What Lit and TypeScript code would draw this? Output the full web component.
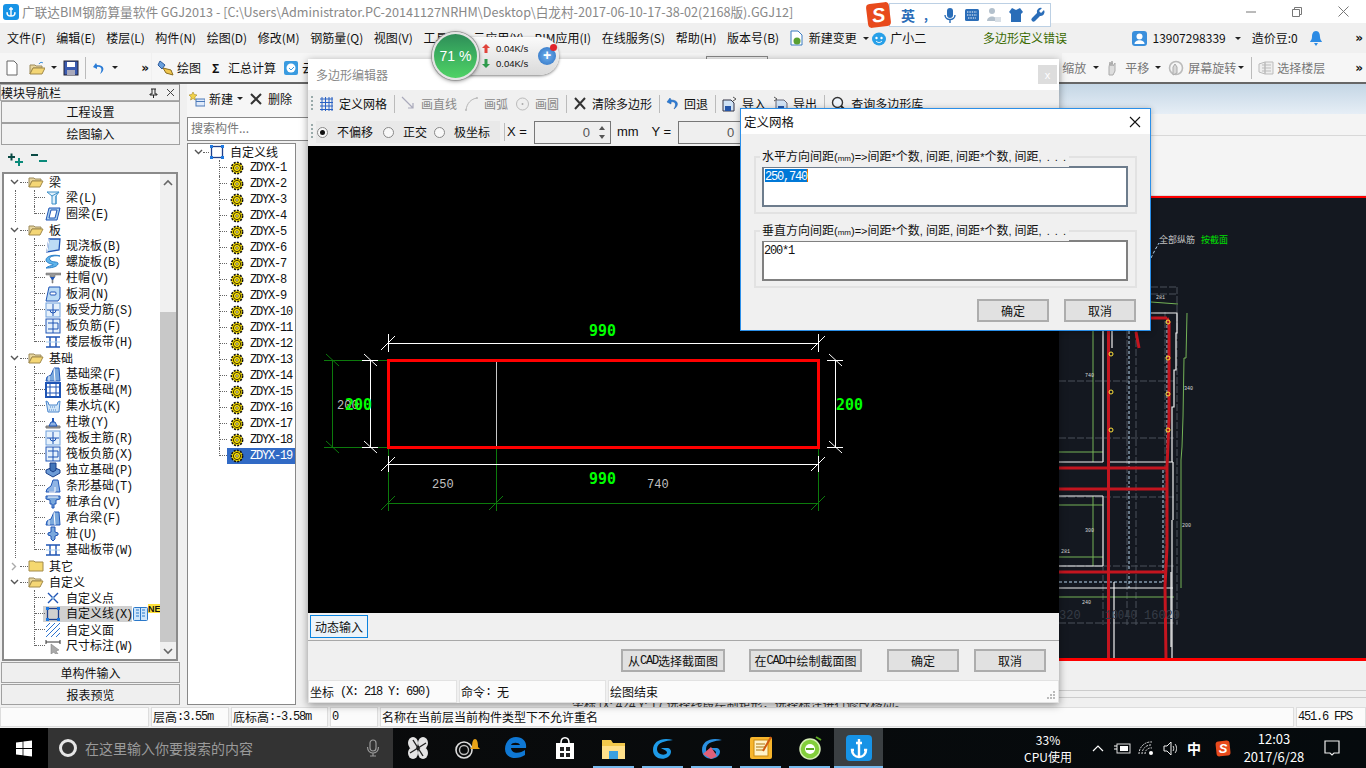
import { css, html, LitElement, svg } from "lit";
import { customElement } from "lit/decorators.js";

const ico = (body: unknown, w = 16, h = 16) =>
  html`<svg class="ico" width=${w} height=${h} viewBox="0 0 ${w} ${h}">${body}</svg>`;

// splits text so latin runs get the narrow mono face, as in the original bitmap font
const mix = (text: string) =>
  text.split(/([\u0020-\u007e]+)/).filter(Boolean).map((part) =>
    /^[\u0020-\u007e]+$/.test(part) ? html`<span class="lat">${part}</span>` : part
  );

const B = "#1f55b5";
const L = "#a9d0f0";
const ICONS: Record<string, unknown> = {
  beam: svg`<path d="M2 2h12l-3 4v8H7V6z" fill="#dff0fb" stroke="#3c8fc8"/><path d="M7 6l7-4M11 6V14" stroke="#3c8fc8" fill="none"/>`,
  ring: svg`<path d="M4 2h11l-3 12H1z" fill="${L}" stroke="${B}"/><path d="M6 4h6l-2 8H4z" fill="#fff" stroke="${B}"/>`,
  slab: svg`<path d="M4 1h11l-1 11-12 2z" fill="#bcdcf5" stroke="${B}" stroke-width="1.3"/><path d="M2 14l2-13" stroke="#fff"/>`,
  spiral: svg`<path d="M15 2C8 1 3 3 5 6s9 1 8 4-7 4-12 4c2-2 5-2 7-3S1 10 1 6 9 0 15 2z" fill="#5db4ea" stroke="#2b7fc9"/>`,
  cap: svg`<path d="M1 3h15v2H10v2H8v6H7V7H5V5H1z" fill="#999" stroke="#666" stroke-width=".5"/><path d="M5 7h5l-2 3H7z" fill="${B}"/>`,
  hole: svg`<path d="M4 1h11v11L13 15H1z" fill="#bcdcf5" stroke="${B}"/><rect x="5" y="6" width="6" height="3" rx="1" fill="#fff" stroke="${B}"/>`,
  rebar: svg`<rect x="1" y="1" width="14" height="14" fill="#e6f1fb" stroke="#6ea0dc"/><path d="M8 2v12M2 8h12M5 8a3 3 0 0 0 6 0" stroke="${B}" fill="none"/>`,
  neg: svg`<rect x="1" y="1" width="14" height="14" fill="#e6f1fb" stroke="${B}"/><path d="M8 1v14M3 5h10v6H3" stroke="${B}" fill="none"/>`,
  strip: svg`<path d="M1 3h14M1 13h14M5 3v10M11 3v10" stroke="${B}" stroke-width="1.4"/><path d="M1 8h14" stroke="${L}"/>`,
  fbeam: svg`<path d="M1 15l1-4 4-2 3-7h5l1 13z" fill="#7aa8dc" stroke="${B}"/><path d="M9 2l1 13M4 15v-5" stroke="#fff"/>`,
  raft: svg`<rect x="1" y="1" width="14" height="14" fill="#fff" stroke="${B}" stroke-width="2"/><path d="M5 1v14M11 1v14M1 5h14M1 11h14" stroke="${B}"/>`,
  sump: svg`<path d="M1 3l2 1 1 3h8l1-3 2-1-1 11H3z" fill="#cfe4f7" stroke="#4a86cc"/><path d="M5 9h6M4 12h8" stroke="#4a86cc" stroke-dasharray="1 1"/>`,
  pier: svg`<path d="M1 12h14v2H1z" fill="#999" stroke="#777"/><path d="M4 12l2-4h4l2 4z" fill="#8fb4e4" stroke="${B}"/><rect x="7" y="4" width="2" height="4" fill="${B}"/>`,
  solo: svg`<path d="M1 8l7-3 7 3v3l-7 4-7-4z" fill="#6c9bd6" stroke="#183f8a"/><path d="M5 1h6v7l-3 2-3-2z" fill="#4375b8" stroke="#183f8a"/>`,
  band: svg`<path d="M1 14l1-3 4-3 2-6h5l2 12z" fill="#8fb4e4" stroke="${B}"/><path d="M4 14h6V9" fill="none" stroke="#fff"/>`,
  pcap: svg`<path d="M1 2h14v3l-4 1v4H9v4H7v-4H5V6L1 5z" fill="#7aa8dc" stroke="${B}"/><path d="M3 3h10" stroke="#fff"/>`,
  pile: svg`<path d="M6 1h4v5l3 1v2l-3 1v3l-2 2-2-2v-3L3 9V7l3-1z" fill="#7aa8dc" stroke="${B}"/>`,
  point: svg`<path d="M3 3l10 10M13 3L3 13" stroke="#1f55b5" stroke-width="1.4"/><circle cx="8" cy="8" r="1.5" fill="#7aa8dc"/>`,
  line: svg`<rect x="2.5" y="2.5" width="11" height="11" fill="none" stroke="#1f3f8a" stroke-width="1.3"/><g fill="#1e78e0"><rect x="1" y="1" width="3" height="3"/><rect x="12" y="1" width="3" height="3"/><rect x="1" y="12" width="3" height="3"/><rect x="12" y="12" width="3" height="3"/></g>`,
  face: svg`<path d="M1 5l4-4M1 10l9-9M1 15L15 1M6 15l9-9M11 15l4-4" stroke="#2d74d0"/>`,
  dim: svg`<path d="M1 2v4M15 2v4M1 4h14" stroke="#333"/><path d="M6 6l8 6-3 1 2 3-2 1-2-3-3 2z" fill="#aaa" stroke="#777" stroke-width=".5"/>`,
};

const folderIcon = (open: boolean) =>
  ico(open
    ? svg`<path d="M1 4h5l1 1h6v2H4L1 13z" fill="#e8d69e" stroke="#9c8a5a"/><path d="M4 7h11l-3 6H1z" fill="#f4d675" stroke="#a28a4a"/>`
    : svg`<path d="M1 3h5l1 1h8v9H1z" fill="#f5d86f" stroke="#a28a4a"/>`);

const gear = ico(svg`<circle cx="7" cy="7" r="5.6" fill="#ffe600" stroke="#111" stroke-width="1.6" stroke-dasharray="2 1.2"/><circle cx="7" cy="7" r="3.6" fill="#ffe600" stroke="#3d3000"/><circle cx="7" cy="7" r="1.3" fill="#fff7a0" stroke="#222" stroke-width=".6"/>`, 14, 14);

const chevDown = ico(svg`<path d="M1 1l3.5 3.5L8 1" fill="none" stroke="#555" stroke-width="1.4"/>`, 9, 6);
const chevRight = ico(svg`<path d="M1 1l3.5 3.5L1 8" fill="none" stroke="#aaa" stroke-width="1.4"/>`, 6, 9);
const caret = html`<span class="caret"></span>`;

const NAV: { t: string; open: boolean; last?: boolean; kids: string[][] }[] = [
  { t: "梁", open: true, kids: [["梁(L)", "beam"], ["圈梁(E)", "ring"]] },
  { t: "板", open: true, kids: [["现浇板(B)", "slab"], ["螺旋板(B)", "spiral"], ["柱帽(V)", "cap"], ["板洞(N)", "hole"], ["板受力筋(S)", "rebar"], ["板负筋(F)", "neg"], ["楼层板带(H)", "strip"]] },
  { t: "基础", open: true, kids: [["基础梁(F)", "fbeam"], ["筏板基础(M)", "raft"], ["集水坑(K)", "sump"], ["柱墩(Y)", "pier"], ["筏板主筋(R)", "rebar"], ["筏板负筋(X)", "neg"], ["独立基础(P)", "solo"], ["条形基础(T)", "band"], ["桩承台(V)", "pcap"], ["承台梁(F)", "fbeam"], ["桩(U)", "pile"], ["基础板带(W)", "strip"]] },
  { t: "其它", open: false, kids: [] },
  { t: "自定义", open: true, last: true, kids: [["自定义点", "point"], ["自定义线(X)", "line"], ["自定义面", "face"], ["尺寸标注(W)", "dim"]] },
];

const MENU = ["文件(F)", "编辑(E)", "楼层(L)", "构件(N)", "绘图(D)", "修改(M)", "钢筋量(Q)", "视图(V)", "工具(T)", "云应用(Y)", "BIM应用(I)", "在线服务(S)", "帮助(H)", "版本号(B)"];

type Seg = number[];
const RED: Seg[] = [
  [1108.5, 330, 1108.5, 660], [1059, 468, 1167, 468], [1059, 489, 1167, 489], [1059, 572, 1166, 572], [1151, 318, 1167, 318],
];
const WHITE: Seg[] = [
  [1103, 330, 1103, 462], [1059, 462, 1103, 462], [1059, 496, 1103, 496], [1103, 496, 1103, 566], [1059, 566, 1103, 566],
  [1108, 462, 1173, 462], [1114, 582, 1114, 660], [1059, 588, 1173, 588], [1172, 520, 1172, 660], [1112, 330, 1112, 348],
];
const GREEN: Seg[] = [
  [1093, 330, 1093, 462], [1059, 452, 1103, 452], [1093, 496, 1093, 566], [1059, 505, 1103, 505], [1059, 557, 1103, 557],
  [1059, 597, 1174, 597], [1151, 302, 1178, 304],
];
const DASH: Seg[] = [
  [1059, 381, 1176, 381], [1059, 438, 1176, 438], [1059, 497, 1176, 497], [1059, 566, 1176, 566], [1059, 623, 1178, 623],
  [1103, 566, 1103, 625], [1127, 331, 1127, 625], [1136, 331, 1136, 625], [1165, 312, 1165, 625], [1177, 287, 1177, 625],
  [1151, 287, 1178, 287], [1151, 294, 1178, 294],
];
const BLUE: Seg[] = [[1129, 331, 1129, 588], [1167, 320, 1167, 465], [1163, 470, 1163, 582], [1059, 582, 1165, 582]];
const RINGS = [[1111, 354], [1111, 392], [1111, 430], [1168, 322], [1168, 358], [1168, 394], [1168, 430]];
const TINY = [[1085, 377, "740"], [1184, 390, "340"], [1182, 527, "200"], [1085, 532, "300"], [1061, 553, "281"], [1082, 604, "240"], [1156, 299, "281"]];

const lines = (segs: Seg[], cls: string) =>
  segs.map(([a, b, c, d]) => svg`<line class=${cls} x1=${a} y1=${b} x2=${c} y2=${d}></line>`);

@customElement("app-root")
export class AppRoot extends LitElement {
  static styles = css`
    :host { display: block; }
    * { box-sizing: border-box; }
    .app {
      position: relative; width: 1366px; height: 768px; overflow: hidden; display: flex; flex-direction: column;
      background: #f0f0f0; color: #111; font: 12px/16px "Noto Sans CJK SC", "Liberation Sans", sans-serif;
    }
    .lat { font-family: "Liberation Mono", monospace; font-size: 12px; letter-spacing: -1.2px; white-space: pre; }
    .ico { display: block; flex: none; }
    .caret { width: 0; height: 0; border: 3px solid transparent; border-top: 3px solid #222; border-bottom: 0; flex: none; }
    .m1 { margin-left: 1px; } .m2 { margin-left: 2px; } .m3 { margin-left: 3px; } .m5 { margin-left: 5px; }
    .m6 { margin-left: 6px; } .m7 { margin-left: 7px; } .m30 { margin-left: 30px; }

    .title { height: 23px; background: #fff; display: flex; align-items: center; padding-left: 3px; color: #888; white-space: nowrap; }
    .title .name { margin-left: 3px; font-family: "Noto Sans CJK SC", "Open Sans", sans-serif; font-size: 12.65px; }
    .logo { width: 16px; height: 16px; border-radius: 3px; background: #1793e6; display: flex; align-items: center; justify-content: center; }
    .logo.big { width: 26px; height: 26px; border-radius: 4px; }
    .winbtns { margin-left: auto; display: flex; }
    .winbtns span { width: 46px; height: 23px; display: flex; align-items: center; justify-content: center; }

    .menu { height: 30px; padding-left: 7px; display: flex; align-items: center; gap: 10.6px; white-space: nowrap; font-size: 12px; }
    .menu .extra { display: flex; align-items: center; gap: 6px; margin-left: -1px; }
    .menu .extra.gx { margin-left: -8px; gap: 3px; }
    .menu .warn { color: #3a6a00; margin-left: 46px; width: 138px; }
    .menu .user { display: flex; align-items: center; gap: 4px; }
    .menu .more { margin-left: auto; padding-right: 3px; }
    .more { font: bold 12px "DejaVu Sans", sans-serif; }

    .tools { height: 31px; display: flex; border-bottom: 2px solid #666; white-space: nowrap; }
    .tbgroup { display: flex; align-items: center; background: #f6f6f6; height: 29px; }
    .tbgroup.a { width: 151px; padding: 0 2px 0 4px; gap: 6px; }
    .tbgroup.a .back { margin-left: -3px; }
    .tbgroup.a .more { margin-left: auto; }
    .tbgroup.b { padding-left: 5px; gap: 3px; margin-left: 1px; width: 554px; }
    .tbgroup.c { margin-left: auto; padding-right: 3px; }
    .vsep { width: 1px; height: 22px; background: #bbb; flex: none; }
    .stub { width: 62px; height: 26px; border: 1px solid #888; border-bottom: 0; margin-top: 3px; }
    .dim { color: #777; }
    .g1 { width: 1px; }

    .body { flex: 1; min-height: 0; display: flex; }
    .nav { width: 181px; display: flex; flex-direction: column; padding-bottom: 2px; }
    .navhead { height: 17px; display: flex; align-items: center; border: 1px solid #aaa; border-right-color: #888; padding: 0 4px 0 0; margin-right: 1px; line-height: 14px; }
    .navhead .t { flex: 1; }
    .navhead svg { margin-left: 8px; }
    .navbtn { height: 22px; margin: 0 1px 0 1px; display: flex; align-items: center; justify-content: center; border: 1px solid #a0a0a0; background: #f2f2f2; flex: none; }
    .navtools { height: 27px; display: flex; align-items: center; padding-left: 6px; gap: 6px; flex: none; }
    .navtree { flex: 1; min-height: 0; margin: 0 3px 0 2px; border: 2px solid #8a8a8a; background: #fff; position: relative; }
    .navbtn.low { margin-top: 1px; background: #efefef; height: 21px; }

    .row { height: 16px; display: flex; align-items: center; white-space: nowrap; position: relative; }
    .row .lead { width: 8px; margin-left: 6px; display: flex; justify-content: center; flex: none; }
    .row .hdot { width: 8px; margin: 0 0 0 2px; border-top: 1px dotted #666; flex: none; }
    .row .ftext { margin-left: 5px; font-size: 12px; }
    .trunk { width: 1px; height: 16px; border-left: 1px dotted #666; flex: none; margin-left: 11px; }
    .trunk.none { border-left-color: transparent; }
    .elbow { width: 11px; height: 16px; margin-left: 18px; flex: none; border-left: 1px dotted #666; }
    .elbow.end { height: 8px; align-self: flex-start; }
    .elbow::after { content: ""; display: block; margin-top: 7px; border-top: 1px dotted #666; }
    .row .label { margin-left: 5px; }
    .sel { position: absolute; left: 39px; top: 0; width: 89px; height: 16px; background: #d0d0d0; z-index: 0; }
    .row > * { z-index: 1; }
    .kid { display: inline-flex; margin-left: 1px; }
    .newb { position: absolute; left: 144px; top: -2px; font: bold 9px/10px "Liberation Sans", sans-serif; color: #111; background: #ffe23a; width: 12px; overflow: hidden; height: 9px; }
    .sb { position: absolute; right: 0; top: 0; bottom: 0; width: 16px; background: #f0f0f0; display: flex; flex-direction: column; align-items: center; }
    .sb .up { height: 138px; width: 100%; padding-top: 5px; display: flex; justify-content: center; }
    .sb .thumb { flex: 1; width: 100%; background: #c8c8c8; }
    .sb .down { height: 17px; display: flex; align-items: center; }

    .comp { width: 127px; display: flex; flex-direction: column; padding-left: 6px; }
    .comptools { height: 33px; display: flex; align-items: center; padding: 0 0 4px 2px; gap: 4px; background: #f6f6f6; white-space: nowrap; }
    .search { height: 24px; border: 1px solid #888; background: #fff; padding: 2px 3px; color: #777; margin-right: -8px; flex: none; }
    .ctree { flex: 1; min-height: 0; margin: 2px 12px 2px 0; border: 1px solid #888; background: #fff; }
    .croot .lead { margin-left: 6px; }
    .croot .hdot { width: 6px; margin-left: 1px; }
    .croot .ftext { margin-left: 5px; }
    .cleaf .elbow { margin-left: 31px; width: 8px; }
    .cleaf .zd { height: 16px; display: flex; align-items: center; padding-left: 3px; flex: 1; color: #111; }
    .cleaf .zd .lat { margin-left: 6px; }
    .cleaf.on .zd { background: #316ac5; }
    .cleaf.on .zd .lat { color: #fff; }

    .main { flex: 1; display: flex; flex-direction: column; min-width: 0; }
    .band { height: 30px; background: linear-gradient(#c4d6e5, #e6eef6); }
    .plain { height: 82px; border-bottom: 1px solid #ddd; background: linear-gradient(#d8d8d8, #d8d8d8) 0 21px / 100% 1px no-repeat, #f4f4f4; }
    .cad { height: 465px; border-top: 2px solid #f00; border-bottom: 3px solid #f00; background: #141820; display: flex; justify-content: flex-end; }
    .cad svg { display: block; flex: none; }
    .foot { flex: 1; min-height: 0; display: flex; flex-direction: column; justify-content: flex-end; }
    .foot .l1 { border-top: 1px solid #ccc; height: 7px; }
    .foot .l2 { border-top: 1px solid #ccc; height: 10px; color: #333; overflow: hidden; line-height: 12px; padding-left: 264px; white-space: nowrap; }
    .s-red { stroke: #c4151f; stroke-width: 3; fill: none; }
    .s-white { stroke: #f2f2f2; stroke-width: 1.2; fill: none; }
    .s-green { stroke: #74b257; stroke-width: 1; fill: none; }
    .s-dash { stroke: #4a505a; stroke-width: 1; stroke-dasharray: 7 2; fill: none; }
    .s-blue { stroke: #b8d8f0; stroke-width: 1; stroke-dasharray: 3 2; fill: none; }
    .ring { stroke: #ffe23a; stroke-width: 1; fill: none; }

    .status { height: 21px; display: flex; gap: 2px; padding-bottom: 1px; }
    .status div { background: #fbfbfb; border: 1px solid #ddd; display: flex; align-items: center; padding-left: 1px; white-space: nowrap; }
    .c0 { width: 149px; } .c1 { width: 78px; } .c2 { width: 97px; } .c3 { width: 48px; } .c4 { flex: 1; } .c5 { width: 70px; }

    .task { height: 40px; display: flex; background: linear-gradient(90deg, #0b0b0b, #050a0d); color: #fff; white-space: nowrap; }
    .start { width: 48px; background: #000; display: flex; align-items: center; justify-content: center; }
    .cortana { width: 345px; background: #333; display: flex; align-items: center; padding-left: 11px; color: #9a9a9a; font-size: 14px; }
    .cortana .o { width: 18px; height: 18px; border-radius: 50%; border: 3px solid #e6e6e6; flex: none; margin-right: 8px; }
    .cortana .mic { margin-left: auto; margin-right: 13px; }
    .tb { width: 49px; display: flex; align-items: center; justify-content: center; }
    .tb.run { background: linear-gradient(#76b9ed, #76b9ed) center bottom / 41px 2px no-repeat; }
    .tb.on { background: linear-gradient(#76b9ed, #76b9ed) center bottom / 100% 2px no-repeat, #3a3f42; }
    .tray { margin-left: 135px; display: flex; align-items: center; }
    .cpu { width: 60px; text-align: center; line-height: 17px; }
    .slot { width: 24px; display: flex; justify-content: center; align-items: center; flex: none; }
    .gap8 { width: 8px; } .gap5 { width: 5px; }
    .zh { font-size: 14px; font-weight: 700; }
    .clock { width: 72px; text-align: center; line-height: 18px; margin-left: 3px; font-size: 13px; }
    .notif { width: 44px; display: flex; justify-content: center; }

    .editor {
      position: absolute; left: 308px; top: 59px; width: 751px; height: 644px; background: #f0f0f0; display: flex; flex-direction: column;
      box-shadow: 0 2px 8px rgba(0, 0, 0, .4); z-index: 2;
    }
    .ehead { height: 31px; background: #fff; display: flex; align-items: center; padding-left: 8px; color: #888; }
    .eclose { margin-left: auto; margin-right: 2px; width: 19px; height: 19px; background: #ddd; color: #fff; display: flex; align-items: center; justify-content: center; font: 11px "Liberation Sans", sans-serif; }
    .ebar { height: 28px; display: flex; align-items: center; padding-left: 3px; white-space: nowrap; }
    .ebar .grip { width: 2px; height: 16px; flex: none; margin-right: 6px; background: repeating-linear-gradient(#9aa, #9aa 2px, transparent 2px, transparent 4px); }
    .ebar .item { display: flex; align-items: center; gap: 5px; margin-right: 7px; }
    .ebar .vsep { margin-right: 6px; height: 18px; }
    .ebar .vsep.s2 { margin-right: 2px; }
    .ebar .off { color: #888; }
    .radios { display: flex; align-items: center; background: #e9e9e9; height: 22px; padding-left: 1px; width: 184px; margin-left: -3px; margin-right: 4px; flex: none; }
    .radio { width: 11px; height: 11px; border: 1px solid #888; border-radius: 50%; background: #f8f8f8; margin: 0 4px 0 0; flex: none; display: flex; align-items: center; justify-content: center; }
    .radio.on::after { content: ""; width: 5px; height: 5px; border-radius: 50%; background: #111; }
    .radios span.tx { margin: 0 10px 0 5px; }
    .radios span.tx.tight { margin-right: 7px; }
    .lbl { font-family: "Liberation Sans", sans-serif; font-size: 13px; }
    .lbl.y { margin-left: 13px; }
    .spin { width: 77px; height: 23px; background: #efefef; border: 1px solid #777; margin: 0 6px 0 7px; display: flex; align-items: center; justify-content: flex-end; color: #555; font: 13px "Liberation Sans", sans-serif; flex: none; }
    .spin .arr { width: 15px; margin-left: 5px; display: flex; flex-direction: column; align-items: center; gap: 5px; }
    .canvas { height: 467px; background: #000; flex: none; }
    .canvas svg { display: block; }
    .dyn { height: 28px; border-bottom: 1px solid #a8a8a8; padding: 2px; flex: none; }
    .dynb { width: 58px; height: 23px; border: 1px solid #0a84e0; background: #ecf4fa; display: flex; align-items: center; justify-content: center; }
    .eact { height: 39px; display: flex; justify-content: flex-end; align-items: center; padding-right: 13px; flex: none; }
    .wbtn { height: 23px; background: #e1e1e1; border: 2px solid #adadad; display: flex; align-items: center; justify-content: center; flex: none; }
    .w103 { width: 104px; margin-right: 24px; } .w113 { width: 113px; margin-right: 25px; } .w72 { width: 72px; } .w72.m { margin-right: 15px; }
    .estat { height: 23px; display: flex; gap: 2px; }
    .estat div { background: #fbfbfb; border: 1px solid #e2e2e2; display: flex; align-items: center; padding-left: 1px; white-space: nowrap; }
    .grip2 { margin-left: auto; margin-right: 2px; align-self: flex-end; margin-bottom: 2px; }
    .e0 { width: 149px; } .e1 { width: 147px; } .e2 { flex: 1; }

    .dlg {
      position: absolute; left: 740px; top: 108px; width: 411px; height: 223px; border: 1.5px solid #2b8fe8; background: #f0f0f0; z-index: 3;
      display: flex; flex-direction: column; box-shadow: 0 1px 6px rgba(0, 0, 0, .3);
    }
    .dhead { height: 25px; background: #fff; display: flex; align-items: center; padding-left: 3px; font-size: 12.5px; flex: none; }
    .dhead svg { margin-left: auto; margin-right: 9px; }
    .dbody { padding: 22px 13px 0 13px; display: flex; flex-direction: column; gap: 16px; flex: 1; }
    .group { height: 58px; border: 2px solid #e2e2e2; padding: 8px 7px 0 6px; display: flex; flex-direction: column; position: relative; }
    .legend { position: absolute; left: 4px; top: -10px; background: #f0f0f0; padding: 0 2px; line-height: 16px; white-space: nowrap; }
    .legend .lat { font-family: "Liberation Sans", sans-serif; font-size: 11px; letter-spacing: 0; }
    .legend .mm { font-size: 8px; }
    .legend .dots { letter-spacing: 1px; }
    .area { height: 41px; border: 2px solid #808080; background: #fff; line-height: 14px; padding: 0; }
    .area.focus { border-color: #6d7c8c; }
    .picked { background: #0078d7; color: #fff; border-right: 1px solid #e87000; display: inline-block; height: 13px; line-height: 12px; margin: 1px 0 0 1px; vertical-align: top; }
    .dact { display: flex; justify-content: flex-end; gap: 15px; padding: 0 14px 8px 0; }

    .net { position: absolute; left: 432px; top: 32px; z-index: 4; display: flex; align-items: center; }
    .globe {
      width: 47px; height: 48px; border-radius: 50%; position: relative; z-index: 1; flex: none; color: #fff; font: 14px "Liberation Sans", sans-serif;
      background: linear-gradient(#2f8d58, #38a85e 35%, #4fd265); border: 2px solid #e4e4e4; box-shadow: 0 0 0 1px #999, 0 1px 4px rgba(0, 0, 0, .5);
      display: flex; align-items: center; justify-content: center;
    }
    .pill {
      margin-left: -22px; width: 102px; height: 38px; border-radius: 0 19px 19px 0; padding-left: 25px; padding-right: 6px;
      background: linear-gradient(#fafafa, #dadada); box-shadow: 0 1px 3px rgba(0, 0, 0, .5); display: flex; align-items: center; gap: 4px;
    }
    .rates { font: 9.5px/15px "Liberation Sans", sans-serif; color: #111; width: 42px; flex: none; }
    .rate { display: flex; align-items: center; gap: 6px; white-space: nowrap; }
    .plus { width: 18px; height: 18px; border-radius: 50%; background: radial-gradient(#6fb0ee, #2c6fc0); color: #fff; position: relative; font: bold 14px/17px "Liberation Sans", sans-serif; text-align: center; flex: none; margin-left: 10px; }
    .plus::after { content: ""; position: absolute; right: -1px; top: -3px; width: 7px; height: 7px; border-radius: 50%; background: #e0242b; }

    .ime { position: absolute; left: 867px; top: 3px; z-index: 4; display: flex; align-items: center; }
    .ime .s { width: 23px; height: 24px; background: #e84a1c; border-radius: 4px; color: #fff; font: italic bold 20px/24px "Liberation Sans", sans-serif; text-align: center; transform: rotate(-7deg); flex: none; z-index: 1; }
    .ime .bar { width: 162px; height: 24px; background: #fff; border: 1px solid #bcd0e4; margin-left: -1px; display: flex; align-items: center; padding-left: 11px; gap: 6px; color: #2a6db8; font-weight: 700; font-size: 14px; }
    .ime .comma { width: 10px; font-size: 12px; margin-left: 3px; margin-right: 2px; }
  `;

  renderNav() {
    return NAV.map(
      (g) => html`
        <div class="row">
          <span class="lead">${g.open ? chevDown : chevRight}</span>
          <span class="hdot"></span>
          ${folderIcon(g.open)}
          <span class="ftext">${g.t}</span>
        </div>
        ${g.kids.map(([label, icon], i) => {
          const picked = label.startsWith("自定义线");
          return html`<div class="row">
            ${picked ? html`<span class="sel"></span>` : ""}
            <span class="trunk ${g.last ? "none" : ""}"></span>
            <span class="elbow ${i === g.kids.length - 1 ? "end" : ""}"></span>
            ${ico(ICONS[icon])}
            <span class="label">${mix(label)}</span>
            ${picked
              ? html`<span class="kid">${ico(svg`<rect x=".5" y="1.5" width="14" height="13" rx="1" fill="#cfe6fb" stroke="#2b78c9"/><path d="M3 4h3M3 7h3M3 10h3M9 4h3M9 7h3M9 10h3M7.5 2v12" stroke="#2b78c9"/>`, 15, 16)}</span>
                  <span class="newb">NE</span>`
              : ""}
          </div>`;
        })}
      `
    );
  }

  renderCompTree() {
    const items = Array.from({ length: 19 }, (_, i) => `ZDYX-${i + 1}`);
    return html`
      <div class="row croot">
        <span class="lead">${chevDown}</span>
        <span class="hdot"></span>
        ${ico(ICONS.line)}
        <span class="ftext">自定义线</span>
      </div>
      ${items.map(
        (z, i) => html`<div class="row cleaf ${i === 18 ? "on" : ""}">
          <span class="elbow ${i === 18 ? "end" : ""}"></span>
          <span class="zd">${gear}<span class="lat">${z}</span></span>
        </div>`
      )}
    `;
  }

  renderRightCad() {
    return html`<svg width="307" height="460" viewBox="1059 198 307 460">
      ${lines(DASH, "s-dash")}
      ${lines(BLUE, "s-blue")}
      ${lines(GREEN, "s-green")}
      <polyline class="s-green" points="1187,313 1186,358 1184,358 1183,417 1182,447 1181,460 1181,588"></polyline>
      ${lines(WHITE, "s-white")}
      <polyline class="s-white" points="1151,313 1177,313 1177,333 1176,333 1176,370 1174,370 1174,407 1172,407 1172,462"></polyline>
      <polyline class="s-white" points="1171,572 1171,647"></polyline>
      ${lines(RED, "s-red")}
      <polyline class="s-red" points="1167,318 1169,322 1169,420 1167,467 1167,547 1165,587 1166,660"></polyline>
      <polyline class="s-red" points="1136,332 1139,348"></polyline>
      <line class="s-white" x1="1173" y1="462" x2="1173" y2="520" stroke-width="2"></line>
      ${RINGS.map(([x, y]) => svg`<circle class="ring" cx=${x} cy=${y} r="2"></circle>`)}
      <polyline class="s-blue" points="1151,258 1155,250 1159,243"></polyline>
      <text x="1159" y="243" fill="#c0c0c0" font-size="9" font-family="Noto Sans CJK SC">全部纵筋</text>
      <text x="1201" y="243" fill="#00e000" font-size="9" font-family="Noto Sans CJK SC">按截面</text>
      <g fill="#363c46" font-size="12" font-family="Liberation Mono">
        <text x="1059" y="619">320</text>
        <text x="1105" y="619" textLength="32" lengthAdjust="spacingAndGlyphs">10040</text>
        <text x="1144" y="619">16020</text>
      </g>
      ${TINY.map(([x, y, t]) => svg`<text x=${x} y=${y} fill="#d8d8d8" font-size="5" font-family="Liberation Mono">${t}</text>`)}
    </svg>`;
  }

  renderEditorCad() {
    const tick = (x: number, y: number) => svg`<path d="M${x - 7} ${y + 7}L${x + 7} ${y - 7}"></path>`;
    const vtick = (x: number, y: number) => svg`<path d="M${x - 6} ${y - 6}L${x + 7} ${y + 6}"></path>`;
    const big = (x: number, y: number, t: string) =>
      svg`<text x=${x} y=${y} textLength="27" lengthAdjust="spacingAndGlyphs">${t}</text>`;
    return html`<svg width="751" height="467" viewBox="308 146 751 467">
      <g stroke="#0c7a0c" fill="none">
        <path shape-rendering="crispEdges" d="M388 448V511M496 448V511M818 448V511M388 503H818M324 360H388M324 447H388M332 360V447"></path>
        ${tick(388, 503)}${tick(496, 503)}${tick(818, 503)}${vtick(332, 360)}${vtick(332, 447)}
      </g>
      <path shape-rendering="crispEdges" d="M496 362V446" stroke="#c8c8c8" fill="none"></path>
      <g stroke="#fff" fill="none">
        <path shape-rendering="crispEdges" d="M388 343H818M388 334V352M818 334V352M388 464H818M388 456V472M818 456V472"></path>
        <path shape-rendering="crispEdges" d="M370 360V447M362 360H378M362 447H378M835 360V447M827 360H843M827 447H843"></path>
        ${tick(388, 343)}${tick(818, 343)}${tick(388, 464)}${tick(818, 464)}
        ${vtick(370, 360)}${vtick(370, 447)}${vtick(835, 360)}${vtick(835, 447)}
      </g>
      <rect x="388.5" y="360.5" width="430" height="87" fill="none" stroke="#f00" stroke-width="3"></rect>
      <g fill="#c0c0c0" font-family="Liberation Mono" font-size="12">
        <text x="432" y="488">250</text><text x="647" y="488">740</text><text x="337" y="409">200</text>
      </g>
      <g fill="#0f0" font-family="DejaVu Sans Mono" font-weight="700" font-size="16">
        ${big(589, 336, "990")}${big(589, 484, "990")}${big(345, 410, "200")}${big(836, 410, "200")}
      </g>
    </svg>`;
  }

  renderEditor() {
    const spin = html`<span class="spin">0<span class="arr">
      ${ico(svg`<path d="M0 4l3-4 3 4z" fill="#555"/>`, 6, 4)}${ico(svg`<path d="M0 0l3 4 3-4z" fill="#555"/>`, 6, 4)}</span></span>`;
    return html`<section class="editor">
      <div class="ehead">多边形编辑器<span class="eclose">x</span></div>
      <div class="ebar">
        <span class="grip"></span>
        <span class="item">${ico(svg`<path d="M1 3h13M1 6.5h13M1 10h13M1 13.5h13M3 1v14M6.5 1v14M10 1v14M13 1v14" stroke="#2a62c4"/>`, 15)} 定义网格</span>
        <span class="vsep"></span>
        <span class="item off">${ico(svg`<path d="M1 1l11 11M12 7v5H7" stroke="#aab" fill="none" stroke-width="1.2"/>`, 15)}画直线</span>
        <span class="item off">${ico(svg`<path d="M2 14C3 7 7 3 13 2" stroke="#b5b5b5" fill="none"/><circle cx="2" cy="14" r="1" fill="#bbb"/><circle cx="13" cy="2" r="1" fill="#bbb"/>`, 15)}画弧</span>
        <span class="item off">${ico(svg`<circle cx="7.5" cy="8" r="6" fill="#eee" stroke="#bbb"/><circle cx="7.5" cy="8" r="1" fill="#aaa"/>`, 15)}画圆</span>
        <span class="vsep"></span>
        <span class="item">${ico(svg`<path d="M2 2l10 11M12 2L2 13" stroke="#333" stroke-width="2"/>`, 14)}清除多边形</span>
        <span class="vsep"></span>
        <span class="item">${ico(svg`<path d="M4 2l-3 4 4 2V6c4-1 6 2 3 7 5-3 5-9-3-9z" fill="#2b7cd6" stroke="#1b5aa8" stroke-width=".5"/>`, 13)}回退</span>
        <span class="vsep"></span>
        <span class="item">${ico(svg`<path d="M1 4h8l3 3v8H1z" fill="#cfe2f5" stroke="#334"/><rect x="3" y="10" width="6" height="5" fill="#2455a8"/><path d="M11 1l3 2-3 2" stroke="#555" fill="none"/>`, 15)}导入</span>
        <span class="item">${ico(svg`<path d="M3 4h8l3 3v8H3z" fill="#cfe2f5" stroke="#667"/><rect x="5" y="10" width="6" height="5" fill="#2455a8"/><path d="M1 1l3 2-3 2" stroke="#555" fill="none"/>`, 15)}导出</span>
        <span class="vsep"></span>
        <span class="item">${ico(svg`<circle cx="6.5" cy="6.5" r="5" fill="#eef4fb" stroke="#333" stroke-width="1.4"/><path d="M10 10l5 5" stroke="#222" stroke-width="2"/>`, 15)}查询多边形库</span>
      </div>
      <div class="ebar">
        <span class="grip"></span>
        <span class="radios">
          <span class="radio on"></span><span class="tx">不偏移</span>
          <span class="radio"></span><span class="tx tight">正交</span>
          <span class="radio"></span><span class="tx">极坐标</span>
        </span>
        <span class="vsep s2"></span>
        <span class="lbl">X =</span>${spin}<span class="lbl">mm</span>
        <span class="lbl y">Y =</span>${spin}
      </div>
      <div class="canvas">${this.renderEditorCad()}</div>
      <div class="dyn"><div class="dynb">动态输入</div></div>
      <div class="eact">
        <span class="wbtn w103">${mix("从CAD选择截面图")}</span>
        <span class="wbtn w113">${mix("在CAD中绘制截面图")}</span>
        <span class="wbtn w72 m">确定</span>
        <span class="wbtn w72">取消</span>
      </div>
      <div class="estat">
        <div class="e0">${mix("坐标 (X: 218 Y: 690)")}</div>
        <div class="e1">${mix("命令: 无")}</div>
        <div class="e2">绘图结束
          <span class="grip2">${ico(svg`<g fill="#bbb"><rect x="7" y="1" width="2" height="2"/><rect x="4" y="4" width="2" height="2"/><rect x="7" y="4" width="2" height="2"/><rect x="1" y="7" width="2" height="2"/><rect x="4" y="7" width="2" height="2"/><rect x="7" y="7" width="2" height="2"/></g>`, 10, 10)}</span>
        </div>
      </div>
    </section>`;
  }

  renderDialog() {
    const legend = (head: string) => html`<span class="legend">${head}<span class="lat">(<span class="mm">mm</span>)=&gt;</span>间距<span class="lat">*</span>个数<span class="lat">, </span>间距<span class="lat">, </span>间距<span class="lat">*</span>个数<span class="lat">, </span>间距<span class="lat dots">, . . .</span></span>`;
    return html`<section class="dlg">
      <div class="dhead">定义网格
        ${ico(svg`<path d="M1 1l10 10M11 1L1 11" stroke="#111" stroke-width="1.1"/>`, 12, 12)}
      </div>
      <div class="dbody">
        <div class="group">
          ${legend("水平方向间距")}
          <div class="area focus"><span class="picked"><span class="lat">250,740</span></span></div>
        </div>
        <div class="group">
          ${legend("垂直方向间距")}
          <div class="area"><span class="lat">200*1</span></div>
        </div>
      </div>
      <div class="dact">
        <span class="wbtn w72">确定</span>
        <span class="wbtn w72">取消</span>
      </div>
    </section>`;
  }

  renderFloaters() {
    return html`
      <div class="net">
        <div class="globe">71 %</div>
        <div class="pill">
          <div class="rates">
            <div class="rate">${ico(svg`<path d="M4 0l4 4H5.5v5h-3V4H0z" fill="#e0443c"/>`, 8, 9)}0.04K/s</div>
            <div class="rate">${ico(svg`<path d="M4 9l4-4H5.5V0h-3v5H0z" fill="#2f9a4c"/>`, 8, 9)}0.04K/s</div>
          </div>
          <span class="plus">+</span>
        </div>
      </div>
      <div class="ime">
        <span class="s">S</span>
        <div class="bar">
          <span>英</span>
          <span class="comma">,</span>
          ${ico(svg`<rect x="5" y="1" width="6" height="10" rx="3" fill="#2a6db8"/><path d="M3 8c0 6 10 6 10 0M8 13v3" stroke="#2a6db8" fill="none" stroke-width="1.4"/>`)}
          ${ico(svg`<rect x="1" y="2" width="14" height="12" rx="1.5" fill="#2a6db8"/><path d="M3 5h10M3 8h10M4 11h8" stroke="#fff" stroke-dasharray="1.4 1"/>`)}
          ${ico(svg`<circle cx="6" cy="4" r="3" fill="#b3c0cc"/><path d="M1 14c0-6 10-6 10 0z" fill="#b3c0cc"/><rect x="9" y="10" width="6" height="5" fill="#d8dfe6"/>`)}
          ${ico(svg`<path d="M4 1l4 2 4-2 3 4-2 2v8H3V7L1 5z" fill="#2a6db8"/>`)}
          ${ico(svg`<path d="M14 3l-3 3-2-2 3-3a4 4 0 0 0-5 5L2 11a2 2 0 0 0 3 3l5-5a4 4 0 0 0 4-6z" fill="#2a6db8"/>`)}
        </div>
      </div>
    `;
  }

  renderTask() {
    const apps = [
      ico(svg`<g fill="#e4e4e4"><ellipse cx="7" cy="7" rx="5" ry="6"/><ellipse cx="17" cy="7" rx="5" ry="6"/><ellipse cx="7" cy="17" rx="5" ry="6"/><ellipse cx="17" cy="17" rx="5" ry="6"/></g><path d="M12 12L7 4M12 12l8-5M12 12l5 8M12 12l-8 5" stroke="#222" stroke-width="1.4"/>`, 24, 24),
      ico(svg`<circle cx="10" cy="14" r="8" fill="none" stroke="#ddd" stroke-width="1.6"/><circle cx="10" cy="14" r="4.5" fill="none" stroke="#bbb" stroke-width="1.4"/><path d="M18 11c0-5 1-8 3-8s3 3 3 8l2 2H16z" fill="#e8a318"/>`, 26, 24),
      ico(svg`<path d="M13 2C6 2 2 8 2 14c0 6 5 9 10 9 4 0 7-1 10-3v-5c-4 3-13 5-14-2h15C24 7 20 2 13 2zM8 10c1-3 8-3 9 0z" fill="#0f78d4"/>`, 26, 26),
      ico(svg`<path d="M3 7h18v16H3z" fill="#fff"/><path d="M8 7c0-7 8-7 8 0" stroke="#fff" fill="none" stroke-width="1.6"/><g fill="#222"><rect x="7" y="11" width="4" height="4"/><rect x="13" y="11" width="4" height="4"/><rect x="7" y="17" width="4" height="4"/><rect x="13" y="17" width="4" height="4"/></g>`, 24, 24),
      ico(svg`<path d="M1 4h9l2 3h12v16H1z" fill="#f2c84b"/><path d="M1 10h23v13H1z" fill="#ffe08a"/><rect x="8" y="15" width="9" height="8" fill="#3aa0e0"/>`, 25, 24),
      ico(svg`<path d="M23 4C12 1 3 5 3 14c0 8 9 11 15 7 4-3 4-8 0-9h-7c3 2 6 2 6 5-2 3-10 2-10-4 0-7 9-8 16-9z" fill="#1e9be8"/>`, 26, 24),
      ico(svg`<path d="M23 4C12 1 3 5 3 14c0 8 9 11 15 7 4-3 4-8 0-9h-7c3 2 6 2 6 5-2 3-10 2-10-4 0-7 9-8 16-9z" fill="#2a8fe0"/><path d="M4 18l8-7 6 9-6 3z" fill="#e0607a"/>`, 26, 24),
      ico(svg`<rect x="2" y="2" width="22" height="22" rx="2" fill="#f7b52c"/><rect x="6" y="5" width="14" height="16" fill="#fff2c8" stroke="#c98a10"/><path d="M8 9h9M8 12h9M8 15h7" stroke="#a87510"/><path d="M15 16L23 2" stroke="#d05a10" stroke-width="2"/>`, 26, 26),
      ico(svg`<circle cx="12" cy="13" r="10" fill="#83cf3c" stroke="#d8f0b8" stroke-width="1.5"/><circle cx="12" cy="13" r="5" fill="#fff"/><path d="M8 13h8" stroke="#5aa820" stroke-width="2"/><path d="M18 1l5 3" stroke="#5aa820" stroke-width="2"/>`, 24, 24),
      html`<span class="logo big">${ico(svg`<path d="M12 3v18M12 21c-4 0-7-3-7-7h2M12 21c4 0 7-3 7-7h-2M9 7h6" stroke="#fff" stroke-width="2.4" fill="none"/>`, 24, 24)}</span>`,
    ];
    return html`<footer class="task">
      <div class="start">${ico(svg`<path d="M0 2.6L6.6 1.7v6.4H0zM7.4 1.6L16 .4v7.7H7.4zM0 8.9h6.6v6.4L0 14.4zM7.4 8.9H16v7.7l-8.6-1.2z" fill="#fff"/>`, 16, 17)}</div>
      <div class="cortana"><span class="o"></span>在这里输入你要搜索的内容
        <span class="mic">${ico(svg`<rect x="4" y="1" width="6" height="11" rx="3" fill="none" stroke="#999" stroke-width="1.2"/><path d="M1.5 8c0 8 11 8 11 0M7 14v3M4 17h6" stroke="#999" fill="none" stroke-width="1.2"/>`, 14, 18)}</span>
      </div>
      ${apps.map((a, i) => html`<div class="tb ${i >= 4 && i < 9 ? "run" : ""} ${i === 9 ? "on" : ""}">${a}</div>`)}
      <div class="tray">
        <div class="cpu">33%<br />CPU使用</div>
        <span class="gap8"></span>
        <span class="slot">${ico(svg`<path d="M1 7l5-5 5 5" stroke="#fff" fill="none" stroke-width="1.2"/>`, 12, 9)}</span>
        <span class="slot">${ico(svg`<rect x="4" y="2" width="13" height="9" fill="none" stroke="#ddd"/><rect x="7" y="4" width="8" height="5" fill="#fff"/><path d="M1 4h3M1 7h3" stroke="#fff"/>`, 18, 13)}</span>
        <span class="slot">${ico(svg`<path d="M1 14A12 12 0 0 1 14 2M4 14a9 9 0 0 1 10-9M7 14a6 6 0 0 1 7-6" stroke="#ddd" fill="none" stroke-dasharray="2 1"/><circle cx="13" cy="13" r="2" fill="#fff"/>`, 16, 16)}</span>
        <span class="slot">${ico(svg`<path d="M1 5h3l4-4v13l-4-4H1z" fill="none" stroke="#eee"/><path d="M10 5c1 1 1 4 0 5M12 3c2 2 2 7 0 9" stroke="#ddd" fill="none"/>`, 15, 15)}</span>
        <span class="slot zh">中</span>
        <span class="gap5"></span>
        <span class="slot">${ico(svg`<rect x="1" y="1" width="14" height="15" rx="3" fill="#e84a1c" transform="rotate(-6 8 8)"/><text x="8" y="13" text-anchor="middle" fill="#fff" font-size="13" font-weight="700" font-style="italic" font-family="Liberation Sans">S</text>`, 16, 17)}</span>
        <div class="clock">12:03<br />2017/6/28</div>
        <div class="notif">${ico(svg`<path d="M1 1h14v12h-5l-2 2-2-2H1z" fill="none" stroke="#eee" stroke-width="1.2"/>`, 16, 16)}</div>
      </div>
    </footer>`;
  }

  render() {
    return html`<div class="app">
      <header class="title">
        <span class="logo">${ico(svg`<path d="M7 2v9M7 11c-2 0-4-1-4-3h1M7 11c2 0 4-1 4-3h-1M5 4h4" stroke="#fff" stroke-width="1.4" fill="none"/>`, 14, 14)}</span>
        <span class="name">广联达BIM钢筋算量软件 GGJ2013 - [C:\\Users\\Administrator.PC-20141127NRHM\\Desktop\\白龙村-2017-06-10-17-38-02(2168版).GGJ12]</span>
        <div class="winbtns">
          <span>${ico(svg`<path d="M0 5h10" stroke="#777"/>`, 10, 10)}</span>
          <span>${ico(svg`<path d="M2.5 2.5V.5h7v7h-2M.5 2.5h7v7h-7z" stroke="#777" fill="none"/>`, 10, 10)}</span>
          <span>${ico(svg`<path d="M.5.5l10 10M10.5.5l-10 10" stroke="#777"/>`, 11, 11)}</span>
        </div>
      </header>

      <nav class="menu">
        ${MENU.map((m) => html`<span>${m}</span>`)}
        <span class="extra">${ico(svg`<path d="M2 1h7l4 4v10H2z" fill="#fff" stroke="#3a7ac0"/><circle cx="8" cy="11" r="3.5" fill="#5aa030"/>`, 14, 16)}<span>新建变更</span>${caret}</span>
        <span class="extra gx">${ico(svg`<ellipse cx="8" cy="9" rx="7" ry="6.5" fill="#28a0e8"/><circle cx="5.5" cy="8" r="1.2" fill="#fff"/><circle cx="10.5" cy="8" r="1.2" fill="#fff"/><path d="M5 11c2 2 4 2 6 0" stroke="#fff" fill="none"/>`)}<span>广小二</span></span>
        <span class="warn">多边形定义错误</span>
        <span class="user">${ico(svg`<rect x="1" y="1" width="15" height="15" rx="3" fill="#3a8fdc"/><circle cx="8.5" cy="6.5" r="3" fill="#fff"/><path d="M3.5 14c0-5 10-5 10 0z" fill="#fff"/>`, 17, 17)}13907298339&nbsp;&nbsp;${caret}</span>
        <span>造价豆:0</span>
        ${ico(svg`<path d="M8 1c3 0 4 3 4 6s2 4 2 5H2c0-1 2-2 2-5s1-6 4-6z" fill="#2c8be4"/><path d="M6 13h4l-2 3z" fill="#2c8be4"/>`)}
        <span class="more">»</span>
      </nav>

      <div class="tools">
        <div class="tbgroup a">
          ${ico(svg`<path d="M3 1h7l3 3v11H3z" fill="#fff" stroke="#666"/>`)}
          <span class="back"></span>
          ${ico(svg`<path d="M1 5h5l1 1h6v2H4L1 14z" fill="#e8d69e" stroke="#9c8a5a"/><path d="M4 8h12l-3 6H1z" fill="#f4d675" stroke="#a28a4a"/><path d="M10 4c1-2 3-2 4-1" stroke="#3a8fdc" fill="none"/>`)}
          ${caret}
          ${ico(svg`<rect x="1" y="1" width="14" height="14" fill="#3a5bb0" stroke="#223"/><rect x="4" y="2" width="8" height="5" fill="#fff"/><rect x="4" y="10" width="8" height="5" fill="#aab"/>`)}
          <span class="vsep"></span>
          ${ico(svg`<path d="M4 3L1 7l4 2V7c4-1 6 2 3 7 5-3 5-9-3-9z" fill="#2b7cd6"/>`, 14, 15)}
          ${caret}
          <span class="more">»</span>
        </div>
        <div class="tbgroup b">
          ${ico(svg`<path d="M3 1l5 4-3 4-4-4z" fill="#6aa0dc" stroke="#2b5a9c"/><path d="M6 8l8 2 2 5-7-2z" fill="#f1c74e" stroke="#8a6d20"/>`, 17, 16)}
          <span>绘图</span>
          <span>&nbsp;&nbsp;&nbsp;<b>Σ</b>&nbsp;&nbsp;</span>
          <span>汇总计算</span>
          <span class="g1"></span>
          ${ico(svg`<rect x="1" y="1" width="14" height="14" rx="2" fill="#3a9be0"/><circle cx="8" cy="8" r="4.5" fill="#fff"/><path d="M6 8l2 2 3-3" stroke="#3a9be0" fill="none"/>`)}
          <span>云</span>
        </div>
        <span class="stub"></span>
        <div class="tbgroup c">
          <span class="dim">缩放</span>
          <span class="caret m7"></span>
          <span class="m5">${ico(svg`<path d="M5 15V7l1-5 1 4 1-5 1 5 2-3v8l-2 4z" fill="#ddd" stroke="#aaa"/>`, 14, 16)}</span>
          <span class="dim m7">平移</span>
          <span class="caret m6"></span>
          <span class="m7">${ico(svg`<circle cx="8" cy="8" r="6.5" fill="none" stroke="#bbb" stroke-width="1.6"/><path d="M5 15V7l2-3 2 3v6z" fill="#d8d8d8" stroke="#aaa"/>`, 17, 16)}</span>
          <span class="dim m3">屏幕旋转</span>
          <span class="caret m2"></span>
          <span class="vsep m7"></span>
          <span class="m6">${ico(svg`<path d="M7 2h8v12H7zM1 4l6-2v12l-6-2zM4 5h9M4 8h9M4 11h9" fill="#eee" stroke="#bbb"/>`)}</span>
          <span class="dim m3">选择楼层</span>
          <span class="more m30">»</span>
        </div>
      </div>

      <div class="body">
        <aside class="nav">
          <div class="navhead"><span class="t">模块导航栏</span>
            ${ico(svg`<path d="M3 1h5M4 1v5H2v1h7V6H7V1M5.5 7v3" stroke="#222" fill="none"/>`, 10, 10)}
            ${ico(svg`<path d="M1 1l7 7M8 1L1 8" stroke="#444"/>`, 9, 9)}
          </div>
          <div class="navbtn">工程设置</div>
          <div class="navbtn">绘图输入</div>
          <div class="navtools">
            ${ico(svg`<path d="M2 7h7M5.5 3.5v7" stroke="#0a4a44" stroke-width="2"/><path d="M9 12h8M13 8v8" stroke="#0a8a7a" stroke-width="2"/>`, 18, 17)}
            ${ico(svg`<path d="M1 5h7" stroke="#0a4a44" stroke-width="2"/><path d="M9 11h8" stroke="#0a8a7a" stroke-width="2"/>`, 18, 17)}
          </div>
          <div class="navtree">
            ${this.renderNav()}
            <div class="sb">
              <div class="up">${ico(svg`<path d="M1 6l4-4 4 4" stroke="#666" fill="none" stroke-width="1.6"/>`, 10, 8)}</div>
              <div class="thumb"></div>
              <div class="down">${ico(svg`<path d="M1 2l4 4 4-4" stroke="#666" fill="none" stroke-width="1.6"/>`, 10, 8)}</div>
            </div>
          </div>
          <div class="navbtn low">单构件输入</div>
          <div class="navbtn low">报表预览</div>
        </aside>

        <div class="comp">
          <div class="comptools">
            ${ico(svg`<path d="M4 1l1.2 2.4L8 4 5.8 6l.6 3L4 7.5 1.6 9l.6-3L0 4l2.8-.6z" fill="#f0d24a" stroke="#a88a20" stroke-width=".6"/><rect x="7" y="8" width="9" height="7" fill="#dfeafa" stroke="#4a78b8"/><path d="M7 10.5h9" stroke="#4a78b8"/>`)}
            <span>新建</span>${caret}
            <span class="m2">${ico(svg`<path d="M2 2l10 10M12 2L2 12" stroke="#333" stroke-width="2"/>`, 14, 14)}</span>
            <span class="m1">删除</span>
          </div>
          <div class="search">搜索构件...</div>
          <div class="ctree">${this.renderCompTree()}</div>
        </div>

        <main class="main">
          <div class="band"></div>
          <div class="plain"></div>
          <div class="cad">${this.renderRightCad()}</div>
          <div class="foot"><div class="l1"></div><div class="l2">坐标 (X: 424 Y: 17 选择线段绘制矩形，选择标注进行修改移动。</div></div>
        </main>
      </div>

      <div class="status">
        <div class="c0"></div>
        <div class="c1">${mix("层高:3.55m")}</div>
        <div class="c2">${mix("底标高:-3.58m")}</div>
        <div class="c3">${mix("0")}</div>
        <div class="c4">名称在当前层当前构件类型下不允许重名</div>
        <div class="c5">${mix("451.6 FPS")}</div>
      </div>

      ${this.renderTask()}
      ${this.renderEditor()}
      ${this.renderDialog()}
      ${this.renderFloaters()}
    </div>`;
  }
}
